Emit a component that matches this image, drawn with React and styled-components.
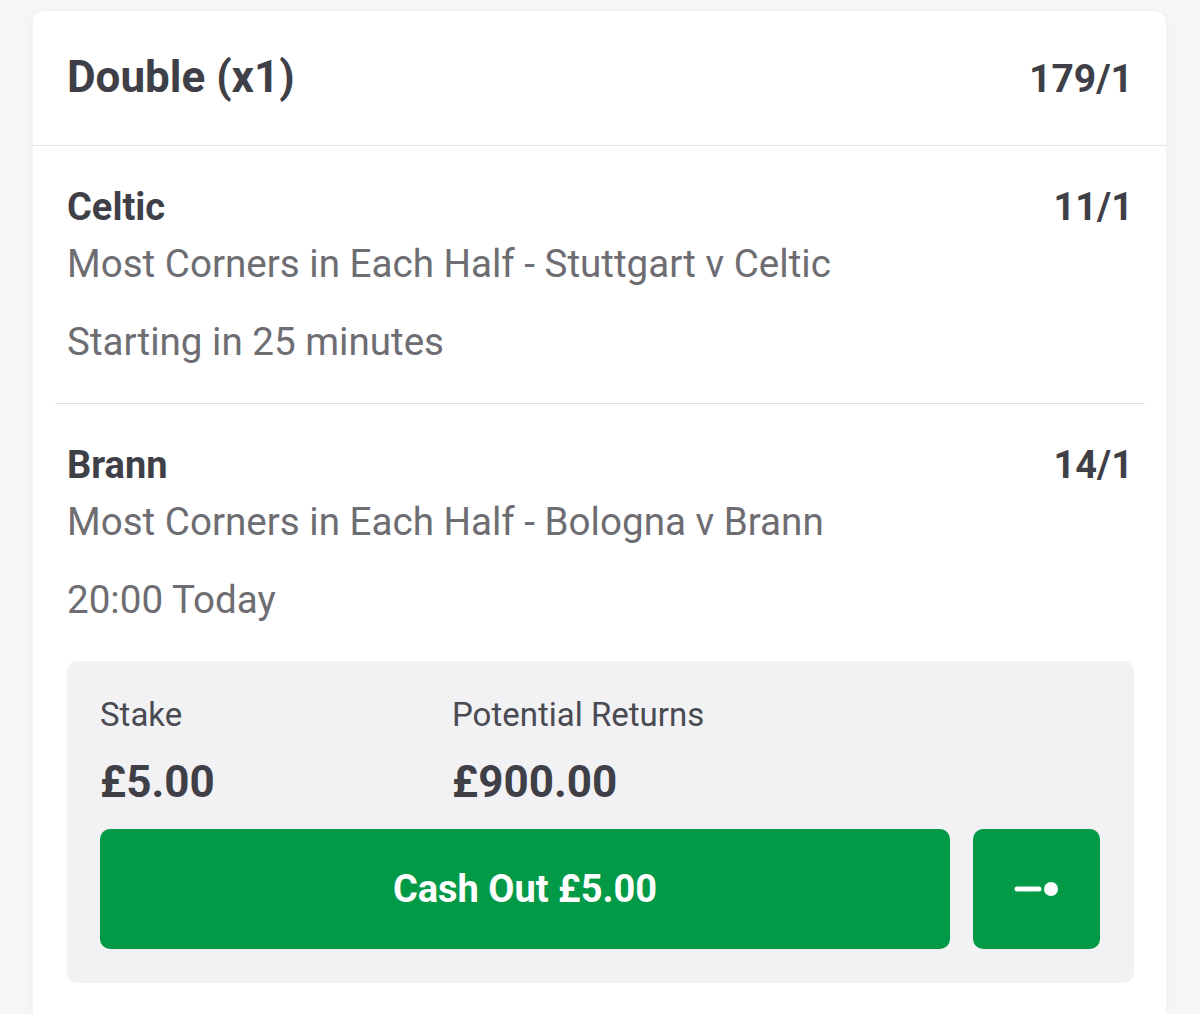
import React from 'react'
import styled, { createGlobalStyle } from 'styled-components'

const GlobalStyle = createGlobalStyle`
  html, body {
    margin: 0;
    padding: 0;
    background: #f6f6f7;
    font-family: Roboto, "Liberation Sans", sans-serif;
  }
`

const selections = [
  {
    team: 'Celtic',
    odds: '11/1',
    market: 'Most Corners in Each Half - Stuttgart v Celtic',
    time: 'Starting in 25 minutes',
  },
  {
    team: 'Brann',
    odds: '14/1',
    market: 'Most Corners in Each Half - Bologna v Brann',
    time: '20:00 Today',
  },
]

function App() {
  return (
    <>
      <GlobalStyle />
      <Page>
        <Card>
          <Header>
            <BetTitle>Double (x1)</BetTitle>
            <BetOdds>179/1</BetOdds>
          </Header>

          {selections.map((s, i) => (
            <Selection key={s.team} last={i === selections.length - 1}>
              <TitleRow>
                <Team>{s.team}</Team>
                <Odds>{s.odds}</Odds>
              </TitleRow>
              <Market>{s.market}</Market>
              <Time>{s.time}</Time>

              {i === selections.length - 1 && (
                <StakeBox>
                  <Figures>
                    <Figure>
                      <Label>Stake</Label>
                      <Amount>£5.00</Amount>
                    </Figure>
                    <Figure>
                      <Label>Potential Returns</Label>
                      <Amount>£900.00</Amount>
                    </Figure>
                  </Figures>
                  <Actions>
                    <CashOutButton>Cash Out £5.00</CashOutButton>
                    <SliderButton aria-label="Partial cash out">
                      <svg width="46" height="16" viewBox="0 0 46 16">
                        <line x1="3" y1="8" x2="25" y2="8" stroke="#fff" strokeWidth="5" strokeLinecap="round" />
                        <circle cx="37" cy="8" r="7" fill="#fff" />
                      </svg>
                    </SliderButton>
                  </Actions>
                </StakeBox>
              )}
            </Selection>
          ))}
        </Card>
      </Page>
    </>
  )
}

export default App

const Page = styled.div`
  padding: 11px 34px 0 33px;
  min-height: 1014px;
  box-sizing: border-box;
  overflow: hidden;
`

const Card = styled.div`
  background: #fff;
  border-radius: 12px 12px 0 0;
  box-shadow: 0 0 10px rgba(0, 0, 0, 0.035);
  width: 1133px;
`

const Header = styled.div`
  display: flex;
  justify-content: space-between;
  align-items: baseline;
  padding: 38px 33px 40px 34px;
  border-bottom: 1px solid #e2e2e8;
`

const BetTitle = styled.div`
  font-weight: 700;
  font-size: 44px;
  line-height: 56px;
  color: #3f3f48;
`

const BetOdds = styled.div`
  font-weight: 700;
  font-size: 39px;
  color: #3f3f48;
`

const Selection = styled.div`
  margin: 0 21px 0 22px;
  padding: 37px 11px 37px 12px;
  border-bottom: ${p => (p.last ? 'none' : '1px solid #e0e0e4')};
`

const TitleRow = styled.div`
  display: flex;
  justify-content: space-between;
  align-items: baseline;
  padding-right: 1px;
`

const Team = styled.div`
  font-weight: 700;
  font-size: 38px;
  line-height: 48px;
  color: #3f3f48;
`

const Odds = styled(Team)``

const Market = styled.div`
  margin-top: 9px;
  font-size: 38.6px;
  line-height: 48px;
  color: #6d6d72;
`

const Time = styled(Market)`
  margin-top: 30px;
`

const StakeBox = styled.div`
  margin-top: 37px;
  background: #f2f2f5;
  border-radius: 10px;
  padding: 34px 34px 34px 33px;
`

const Figures = styled.div`
  display: flex;
`

const Figure = styled.div`
  width: 352px;
`

const Label = styled.div`
  font-size: 33px;
  line-height: 40px;
  color: #4a4a52;
`

const Amount = styled.div`
  margin-top: 21px;
  font-size: 44px;
  line-height: 52px;
  font-weight: 700;
  color: #3f3f48;
`

const Actions = styled.div`
  display: flex;
  gap: 23px;
  margin-top: 21px;
`

const CashOutButton = styled.button`
  flex: 1;
  height: 120px;
  border: none;
  border-radius: 10px;
  background: #029a46;
  color: #fff;
  font-family: Roboto, sans-serif;
  font-weight: 700;
  font-size: 38px;
  cursor: pointer;
`

const SliderButton = styled.button`
  width: 127px;
  height: 120px;
  border: none;
  border-radius: 10px;
  background: #029a46;
  display: flex;
  align-items: center;
  justify-content: center;
  padding: 0;
  cursor: pointer;
`
